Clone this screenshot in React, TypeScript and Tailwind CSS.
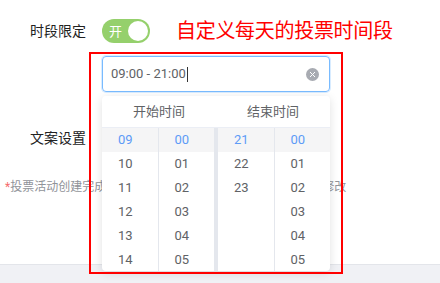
import React from "react";

const leftHours = ["09", "10", "11", "12", "13", "14"];
const rightHours = ["21", "22", "23"];
const minutes = ["00", "01", "02", "03", "04", "05"];

const Column = ({ items, border }: { items: string[]; border?: boolean }) => (
  <div className={`flex-1 flex flex-col ${border ? "border-r border-[#e4e7ed]" : ""}`}>
    {items.map((n, i) => (
      <div
        key={n}
        className={`h-6 shrink-0 pl-4 flex items-center text-[13px] ${
          i === 0 ? "bg-[#f5f5f6] text-[#5d9bf7]" : "text-[#606266]"
        }`}
      >
        {n}
      </div>
    ))}
  </div>
);

export default function App() {
  return (
    <div className="relative w-[440px] h-[283px] overflow-hidden bg-white font-['Roboto','Noto_Sans_CJK_SC',sans-serif] text-[#333]">
      {/* Form */}
      <div className="flex flex-col h-[264px]">
        <div className="flex items-center h-6 mt-[19px]">
          <span className="ml-[30px] w-[72px] text-[14px] text-[#222]">时段限定</span>
          <div className="w-12 h-6 rounded-full bg-[#95d06c] flex items-center justify-between pl-[7px] pr-[2px]">
            <span className="text-white text-[13px] leading-none">开</span>
            <span className="w-5 h-5 rounded-full bg-white" />
          </div>
          <span className="ml-[26px] text-[20px] text-[#ff0000] tracking-[-0.3px]">自定义每天的投票时间段</span>
        </div>

        <div className="ml-[102px] mt-[13px] w-[228px] h-9 rounded border border-[#79bbff] shadow-[0_0_0_1px_#d9ecff] flex items-center pl-2 pr-[10px]">
          <span className="text-[13px] text-[#606266]">09:00 - 21:00</span>
          <span className="w-px h-[15px] bg-[#333] ml-px" />
          <span className="ml-auto w-[13px] h-[13px] rounded-full bg-[#a8abb2] flex items-center justify-center">
            <svg width="7" height="7" viewBox="0 0 7 7">
              <path d="M1 1L6 6M6 1L1 6" stroke="white" strokeWidth="1" />
            </svg>
          </span>
        </div>

        <div className="ml-[30px] mt-[36px] text-[14px] text-[#222]">文案设置</div>

        <div className="ml-[5px] mt-[29px] text-[12px] text-[#909399] whitespace-nowrap">
          <span className="text-[#f56c6c]">*</span>
          投票活动创建完成后，时段限定与文案设置等信息将不可再修改
        </div>
      </div>

      {/* Footer strip */}
      <div className="h-[19px] bg-[#f0f1f5] border-t border-[#e3e5ea]" />

      {/* Time picker dropdown */}
      <div className="absolute left-[102px] top-[96px] w-[228px] h-[175px] bg-white rounded shadow-[0_2px_10px_rgba(0,0,0,0.12)] overflow-hidden flex flex-col">
        <div className="h-8 shrink-0 flex border-b border-[#ebeef5] text-[13px] text-[#606266]">
          <div className="w-[114px] flex items-center justify-center">开始时间</div>
          <div className="flex-1 flex items-center justify-center">结束时间</div>
        </div>
        <div className="flex flex-1">
          <div className="w-[112px] flex">
            <Column items={leftHours} border />
            <Column items={minutes} />
          </div>
          <div className="w-1 bg-[#e4e7ed]" />
          <div className="flex-1 flex">
            <Column items={rightHours} border />
            <Column items={minutes} />
          </div>
        </div>
      </div>

      {/* Annotation box */}
      <div className="absolute left-[89px] top-[52px] w-[254px] h-[222px] border-2 border-[#ff0000] pointer-events-none" />
    </div>
  );
}
